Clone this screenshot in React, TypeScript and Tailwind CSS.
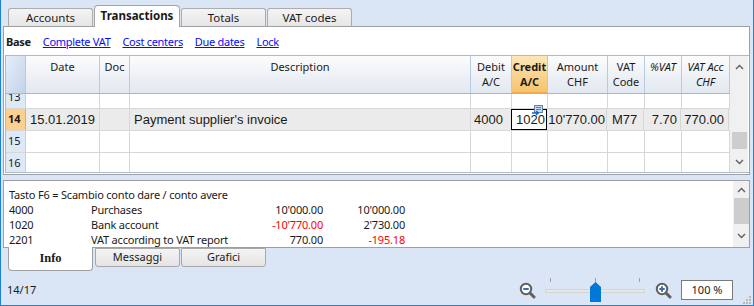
import React from "react";

const HEAD = [
  { w: "w-[74px]", lines: ["Date"], cls: "" },
  { w: "w-[30px]", lines: ["Doc"], cls: "" },
  { w: "w-[341px]", lines: ["Description"], cls: "" },
  { w: "w-[41px]", lines: ["Debit", "A/C"], cls: "" },
  { w: "w-[36px]", lines: ["Credit", "A/C"], cls: "font-bold bg-gradient-to-b from-[#fde6b6] to-[#f6c36c] border-b border-b-[#eea94c]" },
  { w: "w-[60px]", lines: ["Amount", "CHF"], cls: "" },
  { w: "w-[37px]", lines: ["VAT", "Code"], cls: "" },
  { w: "w-[37px]", lines: ["%VAT"], cls: "italic" },
  { w: "w-[48px]", lines: ["VAT Acc", "CHF"], cls: "italic" },
];

const ROWS = [
  { n: "13", cur: false },
  { n: "14", cur: true },
  { n: "15", cur: false },
  { n: "16", cur: false },
];

const INFO = [
  { acc: "4000", desc: "Purchases", a: "10'000.00", b: "10'000.00", ra: false, rb: false },
  { acc: "1020", desc: "Bank account", a: "-10'770.00", b: "2'730.00", ra: true, rb: false },
  { acc: "2201", desc: "VAT according to VAT report", a: "770.00", b: "-195.18", ra: false, rb: true },
];

function ChevUp() {
  return (
    <svg width="9" height="6" viewBox="0 0 9 6">
      <polyline points="1,5 4.5,1.5 8,5" fill="none" stroke="#606060" strokeWidth="1.4" />
    </svg>
  );
}

function ChevDown() {
  return (
    <svg width="9" height="6" viewBox="0 0 9 6">
      <polyline points="1,1 4.5,4.5 8,1" fill="none" stroke="#606060" strokeWidth="1.4" />
    </svg>
  );
}

function Magnifier({ plus }: { plus?: boolean }) {
  return (
    <svg width="17" height="17" viewBox="0 0 17 17">
      <line x1="11" y1="11" x2="15" y2="15" stroke="#5f5f5f" strokeWidth="3" strokeLinecap="round" />
      <circle cx="7" cy="7" r="5.2" fill="#fff" stroke="#5f5f5f" strokeWidth="2" />
      <line x1="4.3" y1="7" x2="9.7" y2="7" stroke="#3c6ea8" strokeWidth="2" />
      {plus && <line x1="7" y1="4.3" x2="7" y2="9.7" stroke="#3c6ea8" strokeWidth="2" />}
    </svg>
  );
}

function CellIcon() {
  return (
    <svg width="11" height="11" viewBox="0 0 11 11" className="absolute right-[3px] -top-[5px]">
      <rect x="2.5" y="0.5" width="8" height="7" fill="#c9d8ea" stroke="#5d82ad" />
      <line x1="4" y1="2.5" x2="9" y2="2.5" stroke="#5d82ad" />
      <line x1="4" y1="4.5" x2="9" y2="4.5" stroke="#5d82ad" />
      <path d="M0 8 H6 M4 6 L6.5 8 L4 10" fill="none" stroke="#1d64c4" strokeWidth="1.3" />
    </svg>
  );
}

function TopTab({ label, active, w }: { label: string; active?: boolean; w: string }) {
  if (active) {
    return (
      <div className={`${w} h-[22px] -mb-px bg-white border border-b-0 border-[#a3a3a3] rounded-t-[4px] flex items-center justify-center font-bold text-[11.5px] pb-[2px]`}>
        {label}
      </div>
    );
  }
  return (
    <div className={`${w} h-[18px] bg-gradient-to-b from-[#f4f4f4] to-[#e6e6e6] border border-b-0 border-[#acacac] rounded-t-[3px] flex items-center justify-center text-[11.5px]`}>
      {label}
    </div>
  );
}

function BottomTab({ label, active }: { label: string; active?: boolean }) {
  if (active) {
    return (
      <div className="w-[85px] h-[24px] bg-white border-x border-b border-[#a0a0a0] rounded-b-[4px] flex items-center justify-center font-['Liberation_Serif',serif] font-bold text-[12.5px]">
        {label}
      </div>
    );
  }
  return (
    <div className="w-[85px] h-[19px] mt-px bg-gradient-to-b from-[#f4f4f4] to-[#e4e4e4] border border-[#a8a8a8] rounded-b-[3px] flex items-center justify-center text-[11px]">
      {label}
    </div>
  );
}

export default function App() {
  return (
    <div className="w-[754px] h-[306px] bg-[#dae5f6] border-x border-b border-[#1c80d6] flex flex-col font-['Noto_Sans',sans-serif] text-[#1a1a1a] overflow-hidden">
      {/* top tabs */}
      <div className="h-[26px] shrink-0 flex items-end pl-[7px] gap-px relative z-10">
        <TopTab label="Accounts" w="w-[85px]" />
        <TopTab label="Transactions" w="w-[86px]" active />
        <TopTab label="Totals" w="w-[85px]" />
        <TopTab label="VAT codes" w="w-[85px]" />
      </div>

      {/* main panel */}
      <div className="ml-[2px] mr-[3px] h-[149px] shrink-0 bg-white border border-[#a0a0a0] flex flex-col">
        <div className="h-[28px] shrink-0 flex items-start pt-[8px] pl-[2px] gap-[12px] text-[11px] leading-[14px] tracking-[-0.3px]">
          <span className="font-bold">Base</span>
          <span className="text-[#0a0aff] underline">Complete VAT</span>
          <span className="text-[#0a0aff] underline">Cost centers</span>
          <span className="text-[#0a0aff] underline">Due dates</span>
          <span className="text-[#0a0aff] underline">Lock</span>
        </div>

        <div className="ml-px flex h-[118px] border-t border-b border-l border-[#a9bad1]">
          <div className="flex flex-col">
            {/* header */}
            <div className="flex h-[38px] border-b border-[#a6b8d0] text-[11px] leading-[15px]">
              <div className="w-[20px] border-r border-[#b9c9de] bg-gradient-to-br from-[#e6eef9] to-[#c3d3e9]" />
              {HEAD.map((h) => (
                <div
                  key={h.lines.join("")}
                  className={`${h.w} border-r border-[#b9c9de] bg-gradient-to-b from-[#fbfcfd] to-[#e2e8f0] pt-[3px] flex flex-col items-center ${h.cls}`}
                >
                  {h.lines.map((l) => (
                    <span key={l} className="whitespace-nowrap">{l}</span>
                  ))}
                </div>
              ))}
            </div>
            {/* body */}
            <div className="h-[78px] overflow-hidden">
              <div className="-mt-[7px] flex flex-col font-['Liberation_Sans',Arial,sans-serif] text-[13px]">
                {ROWS.map((r) => (
                  <div key={r.n} className={`flex h-[22px] border-b border-[#d7d7d7] ${r.cur ? "bg-[#ebebeb]" : "bg-white"}`}>
                    <div
                      className={`w-[20px] border-r font-['Noto_Sans',sans-serif] text-[11px] flex items-center pl-[2px] ${
                        r.cur ? "bg-[#fdd18d] border-[#f0a94a] font-bold" : "bg-[#dfe8f5] border-[#c2d1e5]"
                      }`}
                    >
                      {r.n}
                    </div>
                    <div className="w-[74px] border-r border-[#d7d7d7] flex items-center pl-[4px]">{r.cur ? "15.01.2019" : ""}</div>
                    <div className="w-[30px] border-r border-[#d7d7d7]" />
                    <div className="w-[341px] border-r border-[#d7d7d7] flex items-center pl-[4px]">{r.cur ? "Payment supplier's invoice" : ""}</div>
                    <div className="w-[41px] border-r border-[#d7d7d7] flex items-center justify-end pr-[8px]">{r.cur ? "4000" : ""}</div>
                    {r.cur ? (
                      <div className="w-[36px] relative bg-white border border-black flex items-center pl-[4px] -ml-px">
                        1020
                        <CellIcon />
                      </div>
                    ) : (
                      <div className="w-[36px] border-r border-[#d7d7d7]" />
                    )}
                    <div className="w-[60px] border-r border-[#d7d7d7] flex items-center justify-end pr-[1px]">{r.cur ? "10'770.00" : ""}</div>
                    <div className="w-[37px] border-r border-[#d7d7d7] flex items-center pl-[5px]">{r.cur ? "M77" : ""}</div>
                    <div className="w-[37px] border-r border-[#d7d7d7] flex items-center justify-end pr-[3px]">{r.cur ? "7.70" : ""}</div>
                    <div className="w-[48px] border-r border-[#d7d7d7] flex items-center justify-end pr-[4px]">{r.cur ? "770.00" : ""}</div>
                  </div>
                ))}
              </div>
            </div>
          </div>
          {/* scrollbar */}
          <div className="w-[18px] bg-[#f0f0f0] flex flex-col items-center">
            <div className="h-[20px] flex items-center pt-[2px]"><ChevUp /></div>
            <div className="h-[56px]" />
            <div className="w-[15px] h-[17px] bg-[#cdcdcd]" />
            <div className="flex-1 flex items-center pt-[2px]"><ChevDown /></div>
          </div>
        </div>
      </div>

      {/* info panel */}
      <div className="mt-[5px] ml-[2px] mr-[3px] h-[68px] shrink-0 bg-white border border-[#a0a0a0] flex">
        <div className="flex-1 pt-[6px] pl-[5px] text-[11px] leading-[15px] tracking-[-0.2px]">
          <div>Tasto F6 = Scambio conto dare / conto avere</div>
          {INFO.map((r) => (
            <div key={r.acc} className="flex">
              <span className="w-[82px]">{r.acc}</span>
              <span className="w-[152px]">{r.desc}</span>
              <span className={`w-[80px] text-right ${r.ra ? "text-[#ff0000]" : ""}`}>{r.a}</span>
              <span className={`w-[82px] text-right ${r.rb ? "text-[#ff0000]" : ""}`}>{r.b}</span>
            </div>
          ))}
        </div>
        <div className="w-[16px] bg-[#f0f0f0] flex flex-col items-center">
          <div className="h-[17px] flex items-center pt-[1px]"><ChevUp /></div>
          <div className="w-[15px] h-[26px] bg-[#cdcdcd]" />
          <div className="flex-1 flex items-center"><ChevDown /></div>
        </div>
      </div>

      {/* bottom tabs */}
      <div className="-mt-px h-[24px] shrink-0 flex items-start pl-[7px] relative z-10">
        <BottomTab label="Info" active />
        <div className="w-[2px]" />
        <BottomTab label="Messaggi" />
        <div className="w-px" />
        <BottomTab label="Grafici" />
      </div>

      {/* status */}
      <div className="flex-1 flex items-center pt-[4px] pl-[6px] text-[11px] relative">
        <span>14/17</span>
        <div className="ml-auto mr-[20px] flex items-center">
          <Magnifier />
          <div className="relative w-[100px] h-[24px] ml-[9px] mr-[10px]">
            <div className="absolute left-0 right-0 top-[11px] h-[4px] bg-[#e6e8e8] border border-[#d4d4d4]" />
            <div className="absolute left-[5px] top-0 w-px h-[4px] bg-[#a0a0a0]" />
            <div className="absolute left-[50px] top-0 w-px h-[4px] bg-[#a0a0a0]" />
            <div className="absolute left-[94px] top-0 w-px h-[4px] bg-[#a0a0a0]" />
            <svg width="11" height="20" viewBox="0 0 11 20" className="absolute left-[45px] top-[4px]">
              <polygon points="0,5 5.5,0 11,5 11,20 0,20" fill="#0078d7" />
            </svg>
          </div>
          <Magnifier plus />
          <div className="ml-[9px] w-[52px] h-[20px] bg-white border border-[#7a7a7a] flex items-center justify-center text-[11px]">
            100 %
          </div>
        </div>
        <svg width="8" height="8" viewBox="0 0 8 8" className="absolute right-[2px] bottom-[1px]">
          <rect x="6" y="0" width="2" height="2" fill="#b8b8b8" />
          <rect x="3" y="3" width="2" height="2" fill="#b8b8b8" />
          <rect x="6" y="3" width="2" height="2" fill="#b8b8b8" />
          <rect x="0" y="6" width="2" height="2" fill="#b8b8b8" />
          <rect x="3" y="6" width="2" height="2" fill="#b8b8b8" />
          <rect x="6" y="6" width="2" height="2" fill="#b8b8b8" />
        </svg>
      </div>
    </div>
  );
}
